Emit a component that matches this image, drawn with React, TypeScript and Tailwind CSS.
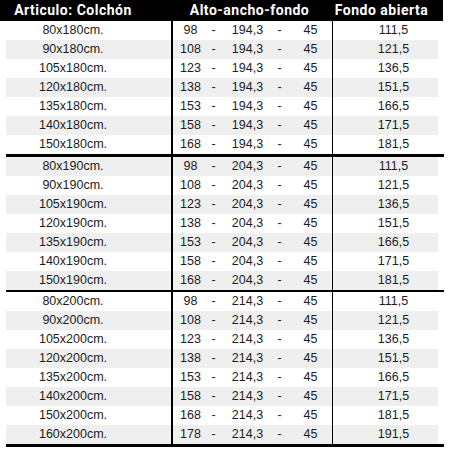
const sections: [string, string, string][][] = [
	['180', '194,3'],
	['190', '204,3'],
	['200', '214,3'],
].map(([len, h], s) => {
	const widths = s === 2 ? [80, 90, 105, 120, 135, 140, 150, 160] : [80, 90, 105, 120, 135, 140, 150];
	return widths.map((w) => [`${w}x${len}cm.`, String(w + 18), h] as [string, string, string]);
});

const fondo = (alto: string) => (Number(alto) + 13.5).toFixed(1).replace('.', ',');

const App = () => {
	let rowIndex = 0;

	return (
		<div className="w-[452px] h-[452px] bg-white overflow-hidden font-['Liberation_Sans',Arial,sans-serif] text-[12.5px] text-[#1c1c1c]">
			<div className="flex items-center h-[21px] w-[443px] bg-black text-white font-['Roboto',sans-serif] font-bold text-[14px] tracking-[0.5px]">
				<div className="w-[146px] shrink-0 text-center">Articulo: Colchón</div>
				<div className="w-[25px] shrink-0" />
				<div className="w-[157px] shrink-0 text-center">Alto-ancho-fondo</div>
				<div className="flex-1 text-center pr-[8px]">Fondo abierta</div>
			</div>

			<div className="pl-[6px]">
				{sections.map((rows, s) => (
					<div key={s}>
						{s > 0 && <div className="h-[2.5px] w-[438px] bg-black" />}
						{rows.map(([size, alto, ancho]) => {
							const gray = rowIndex++ % 2 === 1;
							return (
								<div
									key={size}
									className={`flex h-[19px] w-[432px] items-center ${gray ? 'bg-[#efefef]' : 'bg-white'}`}
								>
									<div className="w-[165px] shrink-0 flex">
										<span className="w-[134px] text-center">{size}</span>
									</div>
									<div className="w-[1.5px] h-full bg-black shrink-0" />
									<div className="w-[159px] shrink-0 flex">
										<span className="w-[36px] text-center">{alto}</span>
										<span className="w-[10px] text-center">-</span>
										<span className="w-[58px] text-center">{ancho}</span>
										<span className="w-[6px] text-center">-</span>
										<span className="w-[40px] ml-[8px] text-center">45</span>
									</div>
									<div className="w-[1.5px] h-full bg-black shrink-0" />
									<div className="flex-1 pl-[16px] text-center">{fondo(alto)}</div>
								</div>
							);
						})}
					</div>
				))}
				<div className="h-[3px] w-[438px] bg-black" />
			</div>
		</div>
	);
};

export default App;
